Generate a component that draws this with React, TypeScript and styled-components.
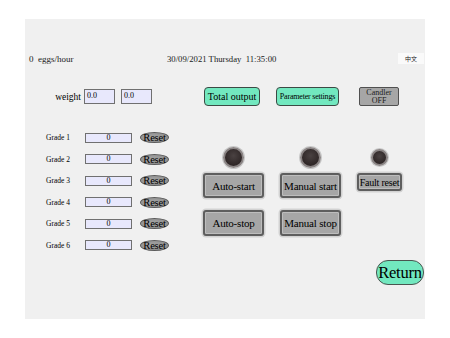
import styled, { createGlobalStyle } from "styled-components";

const GlobalStyle = createGlobalStyle`
	body {
		margin: 0;
		background: #ffffff;
		color: #000000;
		font-family: "Liberation Serif", "Times New Roman", serif;
	}
	button {
		font-family: "Liberation Serif", "Times New Roman", serif;
		color: #000000;
	}
`;

const Page = styled.div`
	padding: 19px 0 0 25px;
`;

const Panel = styled.div`
	width: 400px;
	height: 300px;
	background: #f0f0f0;
	display: flex;
	flex-direction: column;
	padding-top: 34px;
	box-sizing: border-box;
`;

const Header = styled.div`
	display: flex;
	align-items: center;
	height: 11px;
	padding: 0 1px 0 4px;
	color: #1a1a1a;
`;

const Rate = styled.span`
	width: 138px;
	font-size: 9px;
	white-space: pre;
`;

const DateText = styled.span`
	font-size: 8.7px;
	white-space: pre;
`;

const LangButton = styled.button`
	margin-left: auto;
	width: 26px;
	height: 11px;
	padding: 0;
	border: none;
	background: #fafafa;
	font-family: "Noto Sans CJK SC", sans-serif;
	font-size: 6px;
	color: #202020;
`;

const Main = styled.div`
	display: flex;
	margin-top: 23px;
`;

const LeftColumn = styled.div`
	width: 178px;
	display: flex;
	flex-direction: column;
`;

const WeightRow = styled.div`
	display: flex;
	align-items: center;
	height: 19px;
	gap: 3px;
	font-size: 9.5px;
`;

const WeightLabel = styled.span`
	width: 56px;
	text-align: right;
`;

const WeightInput = styled.div`
	width: 31px;
	height: 15px;
	box-sizing: border-box;
	border: 1px solid #707070;
	background: #e8e8fc;
	font-size: 8px;
	line-height: 12px;
	padding-left: 2px;
	& + & {
		margin-left: 3px;
	}
`;

const GradeList = styled.div`
	display: flex;
	flex-direction: column;
	margin-top: 21px;
`;

const GradeRow = styled.div`
	display: flex;
	align-items: center;
	height: 21.5px;
	padding-left: 21px;
	font-size: 7.5px;
`;

const GradeLabel = styled.span`
	width: 39px;
`;

const GradeInput = styled.div`
	width: 47px;
	height: 10px;
	box-sizing: border-box;
	border: 1px solid #707070;
	background: #e8e8fc;
	text-align: center;
	font-size: 8px;
	line-height: 8px;
`;

const ResetButton = styled.button`
	margin-left: 8px;
	width: 29px;
	height: 11px;
	padding: 0;
	border: 1px solid #5a5a5a;
	border-radius: 50%;
	background: radial-gradient(ellipse at 45% 45%, #a4a4a4 0%, #8a8a8a 100%);
	font-size: 10.5px;
	line-height: 9px;
	letter-spacing: -0.2px;
`;

const RightColumn = styled.div`
	flex: 1;
	display: flex;
	flex-direction: column;
	padding-right: 1px;
`;

const TopButtons = styled.div`
	display: flex;
	height: 19px;
	padding-left: 1px;
`;

const GreenButton = styled.button<{ $w: number; $gap: number; $fs: number }>`
	width: ${(p) => p.$w}px;
	margin-right: ${(p) => p.$gap}px;
	height: 19px;
	padding: 0;
	border: 1.5px solid #3c4a44;
	border-radius: 4px;
	background: #72e8bf;
	font-size: ${(p) => p.$fs}px;
	letter-spacing: ${(p) => (p.$fs < 9 ? -0.2 : 0)}px;
	white-space: nowrap;
`;

const CandlerButton = styled.button`
	width: 40px;
	height: 19px;
	padding: 0;
	border: 1.5px solid #505050;
	border-radius: 2px;
	background: #a6a6a6;
	font-size: 8px;
	line-height: 7.5px;
	color: #1a1a1a;
`;

const ControlGrid = styled.div`
	display: grid;
	grid-template-columns: 61px 61px 45px;
	column-gap: 16px;
	grid-template-rows: 20px 25px 32px;
	row-gap: 6px;
	margin-top: 41px;
	align-items: start;
`;

const Lamp = styled.div<{ $size: number }>`
	justify-self: center;
	align-self: center;
	width: ${(p) => p.$size}px;
	height: ${(p) => p.$size}px;
	border-radius: 50%;
	box-sizing: border-box;
	border: 2px solid #8a8484;
	background: radial-gradient(circle at 50% 40%, #4a4242 0%, #2f2727 70%);
	box-shadow: 0 0 0 1px #c8c8c8;
`;

const GrayButton = styled.button<{ $h: number; $fs: number; $top: number }>`
	width: 100%;
	height: ${(p) => p.$h}px;
	margin-top: ${(p) => p.$top}px;
	padding: 0;
	border: 2px solid #5e5e5e;
	border-radius: 3px;
	background: #a6a6a6;
	box-shadow: 0 0 0 1.5px #d2d2d2, inset 0 0 0 1px #bdbdbd;
	font-size: ${(p) => p.$fs}px;
	white-space: nowrap;
	letter-spacing: -0.2px;
`;

const ReturnRow = styled.div`
	display: flex;
	justify-content: flex-end;
	margin-top: 24px;
`;

const ReturnButton = styled.button`
	width: 48px;
	height: 25px;
	padding: 0;
	border: 1.5px solid #4a5550;
	border-radius: 12px;
	background: #72e8bf;
	font-size: 16.5px;
	letter-spacing: -0.2px;
`;

const grades = [1, 2, 3, 4, 5, 6];

export default function App() {
	return (
		<>
			<GlobalStyle />
			<Page>
				<Panel>
					<Header>
						<Rate>0  eggs/hour</Rate>
						<DateText>30/09/2021 Thursday  11:35:00</DateText>
						<LangButton>中文</LangButton>
					</Header>
					<Main>
						<LeftColumn>
							<WeightRow>
								<WeightLabel>weight</WeightLabel>
								<WeightInput>0.0</WeightInput>
								<WeightInput>0.0</WeightInput>
							</WeightRow>
							<GradeList>
								{grades.map((g) => (
									<GradeRow key={g}>
										<GradeLabel>Grade {g}</GradeLabel>
										<GradeInput>0</GradeInput>
										<ResetButton>Reset</ResetButton>
									</GradeRow>
								))}
							</GradeList>
						</LeftColumn>
						<RightColumn>
							<TopButtons>
								<GreenButton $w={56} $gap={16} $fs={10}>
									Total output
								</GreenButton>
								<GreenButton $w={63} $gap={20} $fs={8}>
									Parameter settings
								</GreenButton>
								<CandlerButton>
									Candler
									<br />
									OFF
								</CandlerButton>
							</TopButtons>
							<ControlGrid>
								<Lamp $size={21} />
								<Lamp $size={21} />
								<Lamp $size={17} />
								<GrayButton $h={25} $fs={11} $top={0}>
									Auto-start
								</GrayButton>
								<GrayButton $h={25} $fs={11} $top={0}>
									Manual start
								</GrayButton>
								<GrayButton $h={18} $fs={10} $top={0}>
									Fault reset
								</GrayButton>
								<GrayButton $h={26} $fs={11} $top={6}>
									Auto-stop
								</GrayButton>
								<GrayButton $h={26} $fs={11} $top={6}>
									Manual stop
								</GrayButton>
							</ControlGrid>
							<ReturnRow>
								<ReturnButton>Return</ReturnButton>
							</ReturnRow>
						</RightColumn>
					</Main>
				</Panel>
			</Page>
		</>
	);
}
